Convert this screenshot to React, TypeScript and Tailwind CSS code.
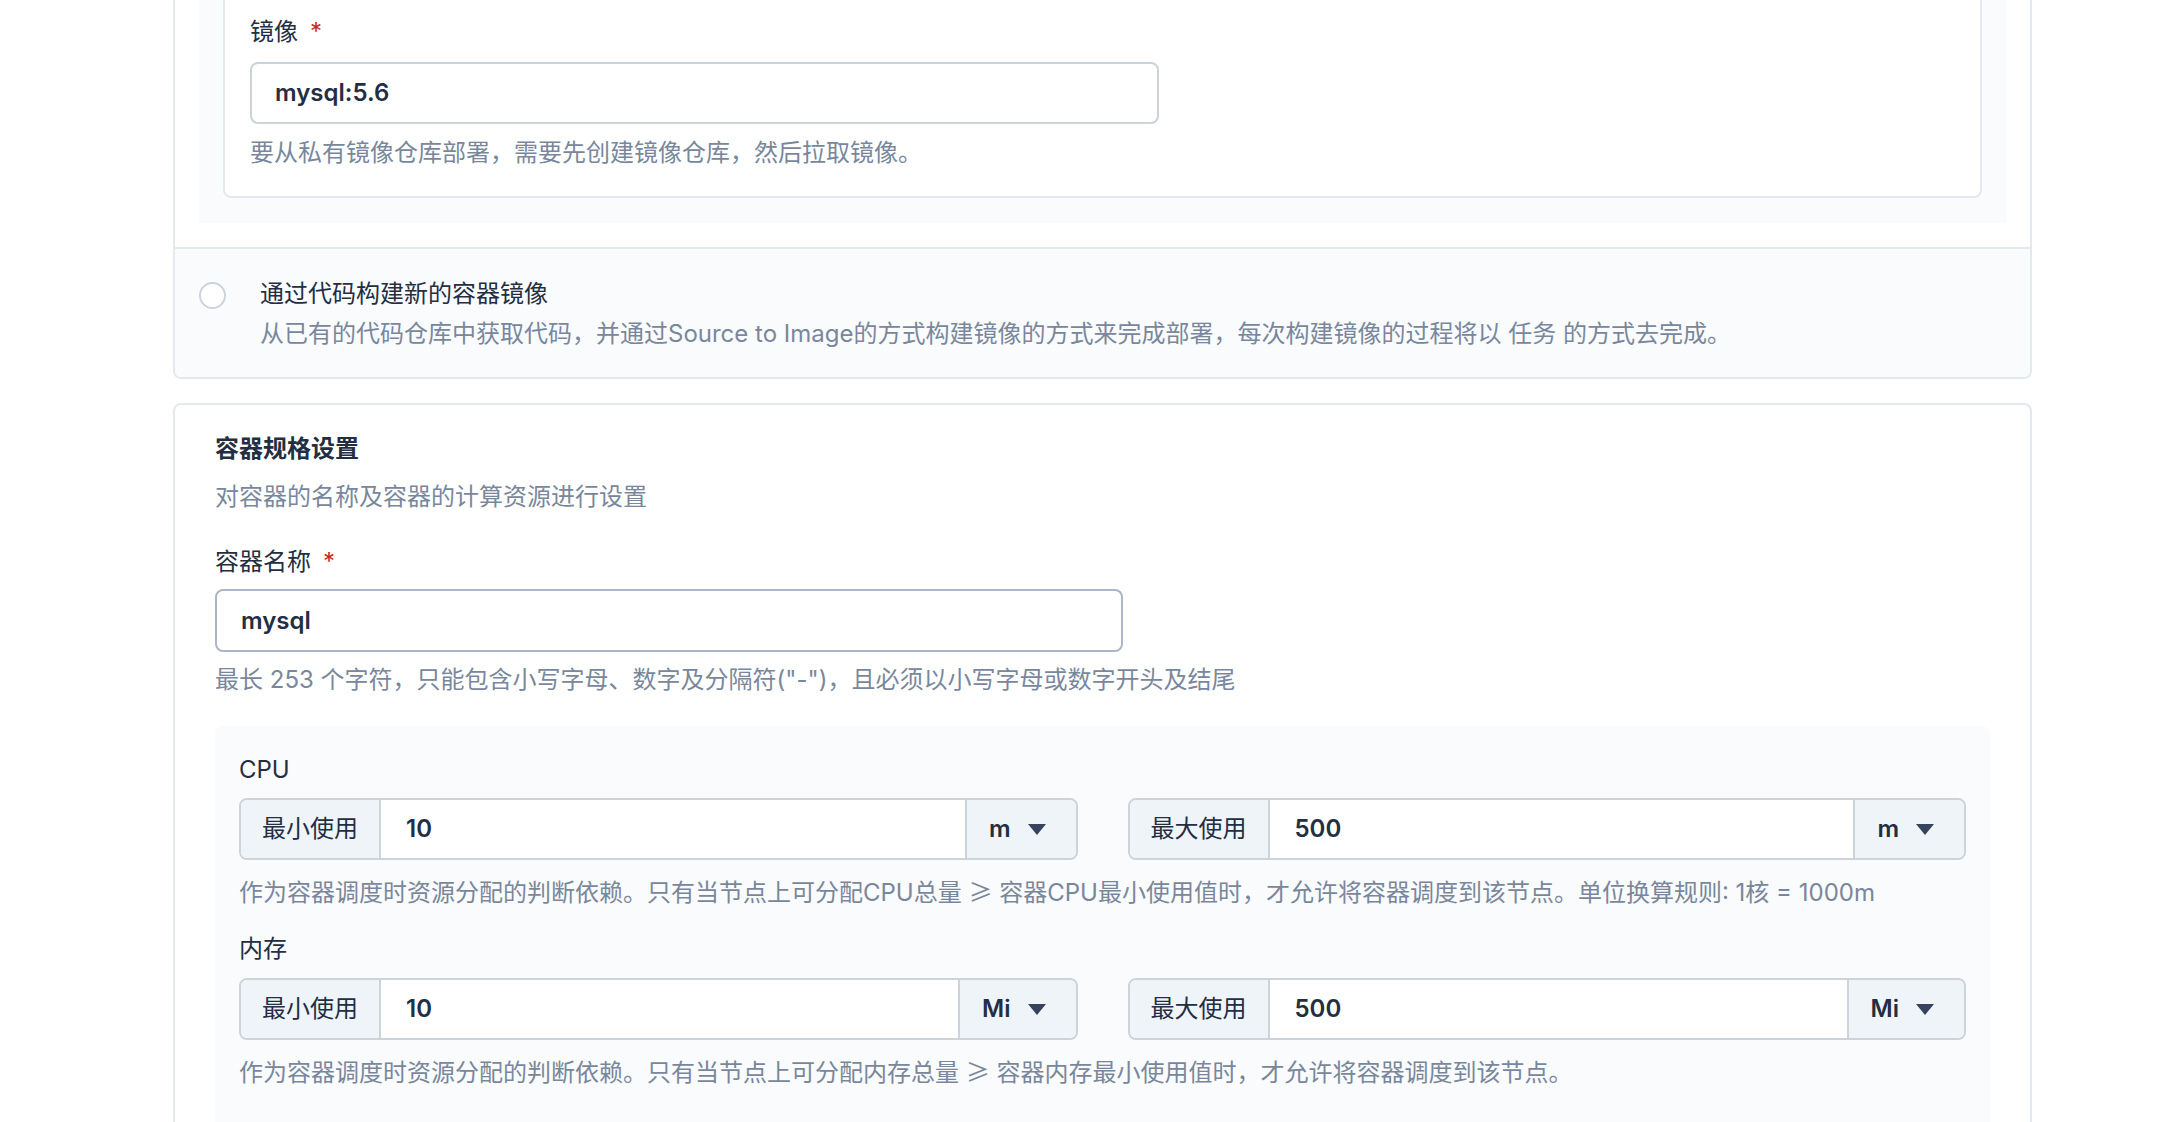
const font = { fontFamily: 'Inter, "Noto Sans CJK SC", sans-serif' };

function Caret() {
  return (
    <svg width="18" height="11" viewBox="0 0 18 11" className="shrink-0">
      <polygon points="0,0 18,0 9,11" fill="#36435c" />
    </svg>
  );
}

function Required() {
  return <span className="ml-[12px] text-[#ca2621]">*</span>;
}

function Gte() {
  return <span style={{ fontFamily: '"Noto Sans CJK SC", sans-serif' }}>≥</span>;
}

interface UnitInputProps {
  label: string;
  value: string;
  unit: string;
}

function UnitInput({ label, value, unit }: UnitInputProps) {
  return (
    <div className="flex h-[62px] rounded-[8px] border-2 border-[#ccd3db] overflow-hidden bg-white">
      <div className="flex items-center px-[21px] bg-[#eff4f9] border-r-2 border-[#ccd3db] text-[#242e42]">
        {label}
      </div>
      <div className="flex-1 flex items-center px-[25px] font-semibold text-[#242e42]">{value}</div>
      <div className="flex items-center gap-[17px] pl-[22px] pr-[30px] bg-[#eff4f9] border-l-2 border-[#ccd3db] font-semibold text-[#242e42]">
        <span>{unit}</span>
        <Caret />
      </div>
    </div>
  );
}

export default function App() {
  return (
    <div className="min-h-screen bg-white overflow-hidden text-[24px] leading-[34px]" style={font}>
      <div className="ml-[173px] w-[1859px] -mt-[61px] flex flex-col">
        {/* image source card */}
        <div className="rounded-[8px] border-2 border-[#e3e9ef] overflow-hidden">
          <div className="px-[24px] pt-[24px] pb-[24px] bg-white">
            <div className="bg-[#f9fbfd] px-[24px] pt-[24px] pb-[25px]">
              <div className="rounded-[8px] border-2 border-[#e3e9ef] bg-white px-[25px] pt-[24px] pb-[26px]">
                <div className="text-[#242e42]">
                  镜像<Required />
                </div>
                <div className="mt-[13px] w-[909px] h-[62px] rounded-[8px] border-2 border-[#ccd3db] flex items-center px-[23px] font-semibold text-[#242e42]">
                  mysql:5.6
                </div>
                <div className="mt-[12px] text-[#79879c]">要从私有镜像仓库部署，需要先创建镜像仓库，然后拉取镜像。</div>
              </div>
            </div>
          </div>
          <div className="border-t-2 border-[#e3e9ef] bg-[#f9fbfd] flex items-start px-[24px] pt-[28px] pb-[26px]">
            <div className="mt-[5px] w-[27px] h-[27px] rounded-full border-2 border-[#ccd3db] bg-white shrink-0" />
            <div className="ml-[34px]">
              <div className="text-[#242e42]">通过代码构建新的容器镜像</div>
              <div className="mt-[6px] text-[#79879c]">
                从已有的代码仓库中获取代码，并通过Source to Image的方式构建镜像的方式来完成部署，每次构建镜像的过程将以 任务 的方式去完成。
              </div>
            </div>
          </div>
        </div>

        {/* container spec card */}
        <div className="mt-[24px] rounded-[8px] border-2 border-[#e3e9ef] bg-white px-[40px] pt-[27px] pb-[40px]">
          <div className="font-bold text-[#242e42]">容器规格设置</div>
          <div className="mt-[14px] text-[#79879c]">对容器的名称及容器的计算资源进行设置</div>
          <div className="mt-[31px] text-[#242e42]">
            容器名称<Required />
          </div>
          <div className="mt-[10px] w-[908px] h-[63px] rounded-[8px] border-2 border-[#abb7c6] flex items-center px-[24px] font-semibold text-[#242e42]">
            mysql
          </div>
          <div className="mt-[11px] text-[#79879c]">
            最长 253 个字符，只能包含小写字母、数字及分隔符("-")，且必须以小写字母或数字开头及结尾
          </div>

          <div className="mt-[29px] rounded-[8px] bg-[#f9fbfd] px-[24px] pt-[27px] pb-[60px]">
            <div className="text-[#242e42]">CPU</div>
            <div className="mt-[11px] grid grid-cols-2 gap-[50px]">
              <UnitInput label="最小使用" value="10" unit="m" />
              <UnitInput label="最大使用" value="500" unit="m" />
            </div>
            <div className="mt-[14px] text-[#79879c]">
              作为容器调度时资源分配的判断依赖。只有当节点上可分配CPU总量 <Gte /> 容器CPU最小使用值时，才允许将容器调度到该节点。单位换算规则: 1核 = 1000m
            </div>
            <div className="mt-[22px] text-[#242e42]">内存</div>
            <div className="mt-[12px] grid grid-cols-2 gap-[50px]">
              <UnitInput label="最小使用" value="10" unit="Mi" />
              <UnitInput label="最大使用" value="500" unit="Mi" />
            </div>
            <div className="mt-[14px] text-[#79879c]">
              作为容器调度时资源分配的判断依赖。只有当节点上可分配内存总量 <Gte /> 容器内存最小使用值时，才允许将容器调度到该节点。
            </div>
          </div>
        </div>
      </div>
    </div>
  );
}
